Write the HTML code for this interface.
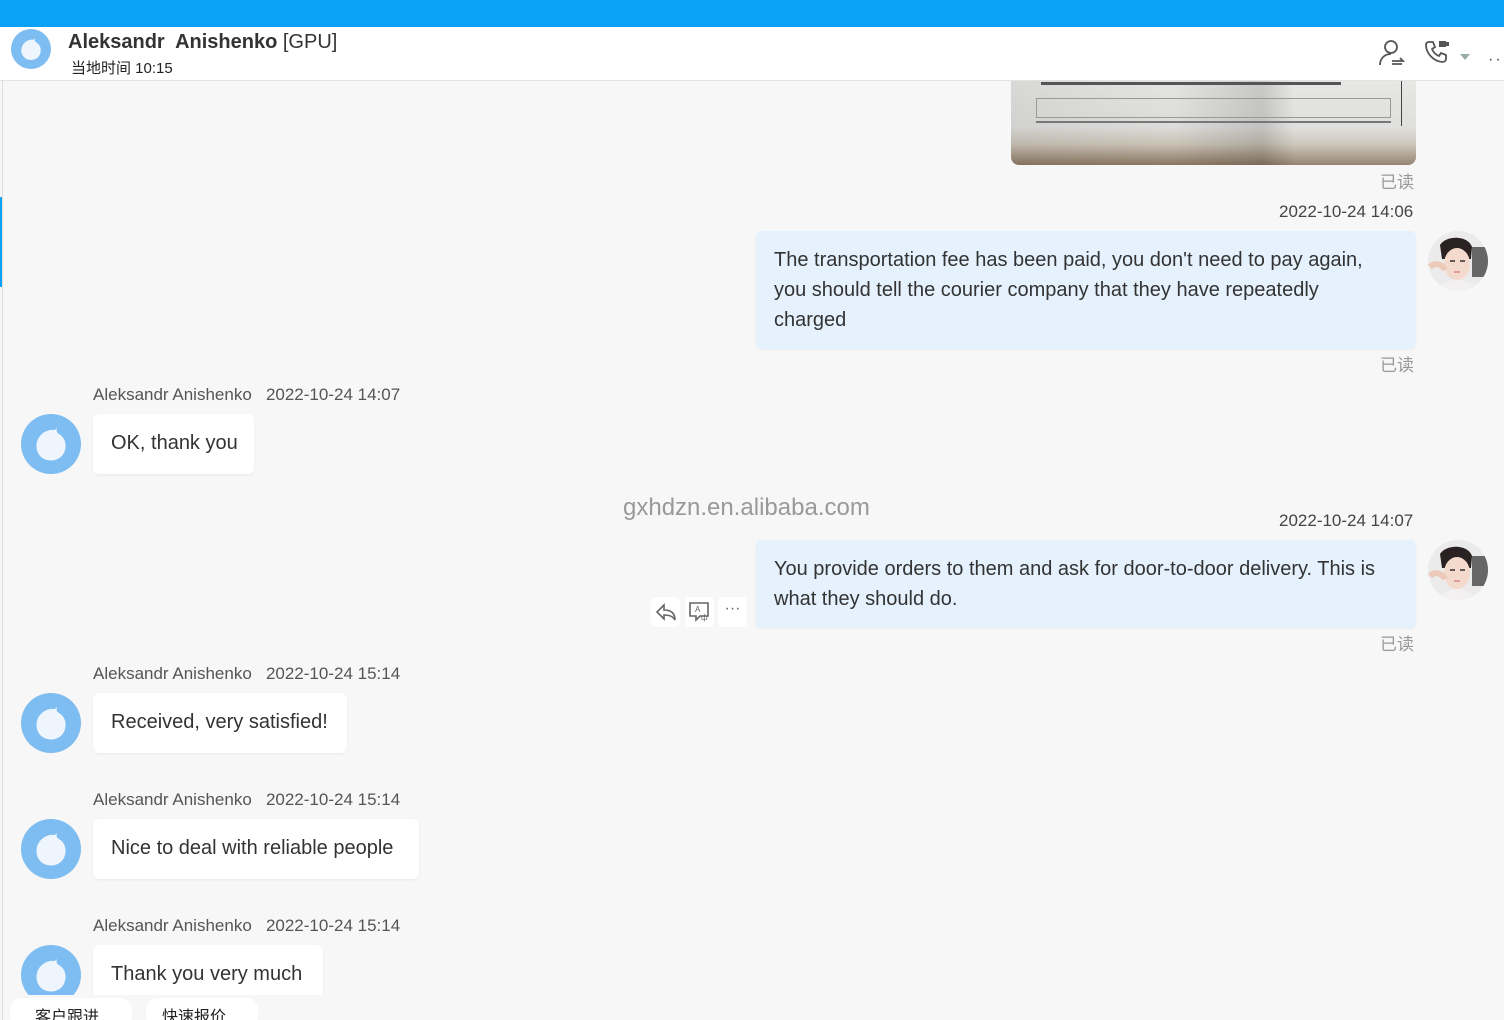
<!DOCTYPE html>
<html style="width:1504px;height:1020px;overflow:hidden"><head><meta charset="utf-8"><style>
*{margin:0;padding:0;box-sizing:border-box}
html,body{width:1504px;height:1020px;overflow:hidden}
body{background:#f7f7f7;font-family:"Liberation Sans","Noto Sans CJK SC",sans-serif;color:#333;position:relative}
.a{position:absolute}
.top{left:0;top:0;width:1504px;height:27px;background:#0aa2f7}
.hdr{left:0;top:27px;width:1504px;height:54px;background:#fff;border-bottom:1px solid #e2e2e2}
.bub{position:absolute;font-size:20px;line-height:30px;white-space:nowrap}
.me{background:#e5f1fd;border-radius:6px;padding:14px 18px;box-shadow:0 1px 2px rgba(0,0,0,.05)}
.th{background:#fff;border-radius:6px;box-shadow:0 1px 2px rgba(0,0,0,.06)}
.meta{position:absolute;font-size:17px;color:#555;white-space:nowrap}
.gray{position:absolute;font-size:17px;color:#999;font-family:"Noto Sans CJK SC",sans-serif}
.ts{position:absolute;font-size:17px;color:#444;white-space:nowrap}
</style></head><body>
<svg width="0" height="0" style="position:absolute"><defs>
<symbol id="av" viewBox="0 0 60 60"><circle cx="30" cy="30" r="30" fill="#7dbdf2"/><path d="M36 14c-1 3 0 5 2 6 5 3 8 9 6 16-2 8-10 12-18 10-8-2-12-10-10-18 2-8 10-13 17-12 1 0 2-1 3-2z" fill="#eef5fd"/></symbol>
<clipPath id="c"><circle cx="30" cy="30" r="30"/></clipPath>
<symbol id="wm" viewBox="0 0 60 60"><g clip-path="url(#c)"><rect width="60" height="60" fill="#ecebeb"/><rect x="44" y="16" width="16" height="30" fill="#666"/><path d="M12 14c6-10 28-10 32 2l-1 12H14z" fill="#2a2222"/><ellipse cx="29" cy="33" rx="13" ry="16" fill="#f3dacd"/><path d="M10 60c4-9 12-11 19-11s16 3 20 11z" fill="#f2f0f0"/><path d="M2 36c5-5 12-3 15 3" stroke="#ecc9b8" stroke-width="6" fill="none"/><path d="M22 30h5M32 30h5" stroke="#333" stroke-width="1.5"/><path d="M26 41h6" stroke="#d88" stroke-width="1.5"/></g></symbol>
</defs></svg>
<div class="a top"></div>
<div class="a hdr"></div>
<svg class="a" style="left:11px;top:29px" width="40" height="40"><use href="#av"/></svg>
<div class="a" style="left:68px;top:31px;font-size:20px;font-weight:bold;color:#333;white-space:nowrap">Aleksandr&nbsp; Anishenko <span style="font-weight:normal">[GPU]</span></div>
<div class="a" style="left:71px;top:57px;font-size:15px;color:#222;white-space:nowrap">当地时间 10:15</div>
<svg class="a" style="left:1378px;top:39px" width="30" height="28" viewBox="0 0 30 28" fill="none" stroke="#555" stroke-width="1.8"><circle cx="13" cy="8" r="6"/><path d="M2 26c0-7 5-11 11-11"/><path d="M14 22h11l-3-3M24 25H14"/></svg>
<svg class="a" style="left:1424px;top:39px" width="30" height="26" viewBox="0 0 30 26" fill="none" stroke="#555" stroke-width="1.8"><path d="M5 3l4 0 2 5-3 2c1 3 4 6 7 7l2-3 5 2v4c0 2-2 3-4 3C9 22 2 14 2 6c0-2 1-3 3-3z"/><rect x="15" y="2" width="7" height="6" fill="#555" stroke="none"/><rect x="22" y="3" width="3" height="4" fill="#555" stroke="none"/></svg>
<div class="a" style="left:1460px;top:54px;width:0;height:0;border-left:5px solid transparent;border-right:5px solid transparent;border-top:6px solid #9aa"></div>
<div class="a" style="left:1488px;top:51px;font-size:16px;color:#444;letter-spacing:2px">··</div>
<div class="a" style="left:2px;top:81px;width:1px;height:939px;background:#ddd"></div>
<div class="a" style="left:0;top:197px;width:2px;height:90px;background:#0aa2f7"></div>
<div class="a" style="left:1011px;top:81px;width:405px;height:84px;border-radius:0 0 8px 8px;overflow:hidden;background:linear-gradient(180deg,#e4e4e2 0%,#dcdcda 55%,#c9c2b6 75%,#8a7662 100%)">
<div class="a" style="left:0;top:0;width:405px;height:84px;background:linear-gradient(90deg,rgba(0,0,0,.05) 0%,rgba(0,0,0,0) 40%,rgba(0,0,0,.12) 62%,rgba(255,255,255,.1) 70%)"></div>
<div class="a" style="left:25px;top:17px;width:355px;height:20px;border:1px solid #999"></div>
<div class="a" style="left:25px;top:40px;width:355px;height:2px;background:#777"></div>
<div class="a" style="left:30px;top:1px;width:300px;height:3px;background:#555"></div>
<div class="a" style="left:390px;top:0;width:1px;height:45px;background:#444"></div>
</div>
<div class="gray" style="left:1380px;top:168px">已读</div>
<div class="ts" style="left:1279px;top:202px">2022-10-24 14:06</div>
<div class="bub me" style="left:756px;top:231px;width:660px;height:118px">The transportation fee has been paid, you don't need to pay again,<br>you should tell the courier company that they have repeatedly<br>charged</div>
<svg class="a" style="left:1428px;top:231px" width="60" height="60"><use href="#wm"/></svg>
<div class="gray" style="left:1380px;top:351px">已读</div>

<div class="meta" style="left:93px;top:385px">Aleksandr Anishenko&nbsp;&nbsp; 2022-10-24 14:07</div>
<svg class="a" style="left:21px;top:414px" width="60" height="60"><use href="#av"/></svg>
<div class="bub th" style="left:93px;top:414px;width:161px;height:60px;padding:14px 18px">OK, thank you</div>

<div class="a" style="left:623px;top:494px;font-size:24px;color:#999;white-space:nowrap">gxhdzn.en.alibaba.com</div>
<div class="ts" style="left:1279px;top:511px">2022-10-24 14:07</div>
<div class="bub me" style="left:756px;top:540px;width:660px;height:88px">You provide orders to them and ask for door-to-door delivery. This is<br>what they should do.</div>
<svg class="a" style="left:1428px;top:540px" width="60" height="60"><use href="#wm"/></svg>
<div class="a" style="left:651px;top:597px;width:29px;height:30px;background:#fff;border-radius:5px"></div>
<svg class="a" style="left:655px;top:602px" width="22" height="20" viewBox="0 0 22 20" fill="none" stroke="#666" stroke-width="1.6"><path d="M9 3L2 10l7 7v-4c5 0 9 1 11 5 0-7-4-10-11-10z"/></svg>
<div class="a" style="left:685px;top:597px;width:29px;height:30px;background:#fff;border-radius:5px"></div>
<svg class="a" style="left:688px;top:601px" width="24" height="22" viewBox="0 0 24 22" fill="none" stroke="#666" stroke-width="1.6"><path d="M2 2h18v13h-8l-4 4v-4H2z"/><text x="7" y="11" font-size="8" fill="#666" stroke="none" font-family="Liberation Sans">A</text><text x="13" y="19" font-size="8" fill="#666" stroke="none" font-family="Liberation Sans">ф</text></svg>
<div class="a" style="left:718px;top:597px;width:29px;height:30px;background:#fff;border-radius:5px;text-align:center;font-size:16px;color:#666;line-height:24px">···</div>
<div class="gray" style="left:1380px;top:630px">已读</div>

<div class="meta" style="left:93px;top:664px">Aleksandr Anishenko&nbsp;&nbsp; 2022-10-24 15:14</div>
<svg class="a" style="left:21px;top:693px" width="60" height="60"><use href="#av"/></svg>
<div class="bub th" style="left:93px;top:693px;width:254px;height:60px;padding:14px 18px">Received, very satisfied!</div>

<div class="meta" style="left:93px;top:790px">Aleksandr Anishenko&nbsp;&nbsp; 2022-10-24 15:14</div>
<svg class="a" style="left:21px;top:819px" width="60" height="60"><use href="#av"/></svg>
<div class="bub th" style="left:93px;top:819px;width:326px;height:60px;padding:14px 18px">Nice to deal with reliable people</div>

<div class="meta" style="left:93px;top:916px">Aleksandr Anishenko&nbsp;&nbsp; 2022-10-24 15:14</div>
<svg class="a" style="left:21px;top:945px" width="60" height="60"><use href="#av"/></svg>
<div class="bub th" style="left:93px;top:945px;width:230px;height:60px;padding:14px 18px">Thank you very much</div>
<div class="a" style="left:3px;top:995px;width:1501px;height:25px;background:#f7f7f7"></div>
<div class="a" style="left:10px;top:998px;width:122px;height:30px;background:#fff;border-radius:12px"></div>
<div class="a" style="left:146px;top:998px;width:112px;height:30px;background:#fff;border-radius:12px"></div>
<div class="a" style="left:35px;top:1003px;font-size:16px;color:#222;font-family:'Noto Sans CJK SC',sans-serif">客户跟进</div>
<div class="a" style="left:162px;top:1003px;font-size:16px;color:#222;font-family:'Noto Sans CJK SC',sans-serif">快速报价</div>
</body></html>
